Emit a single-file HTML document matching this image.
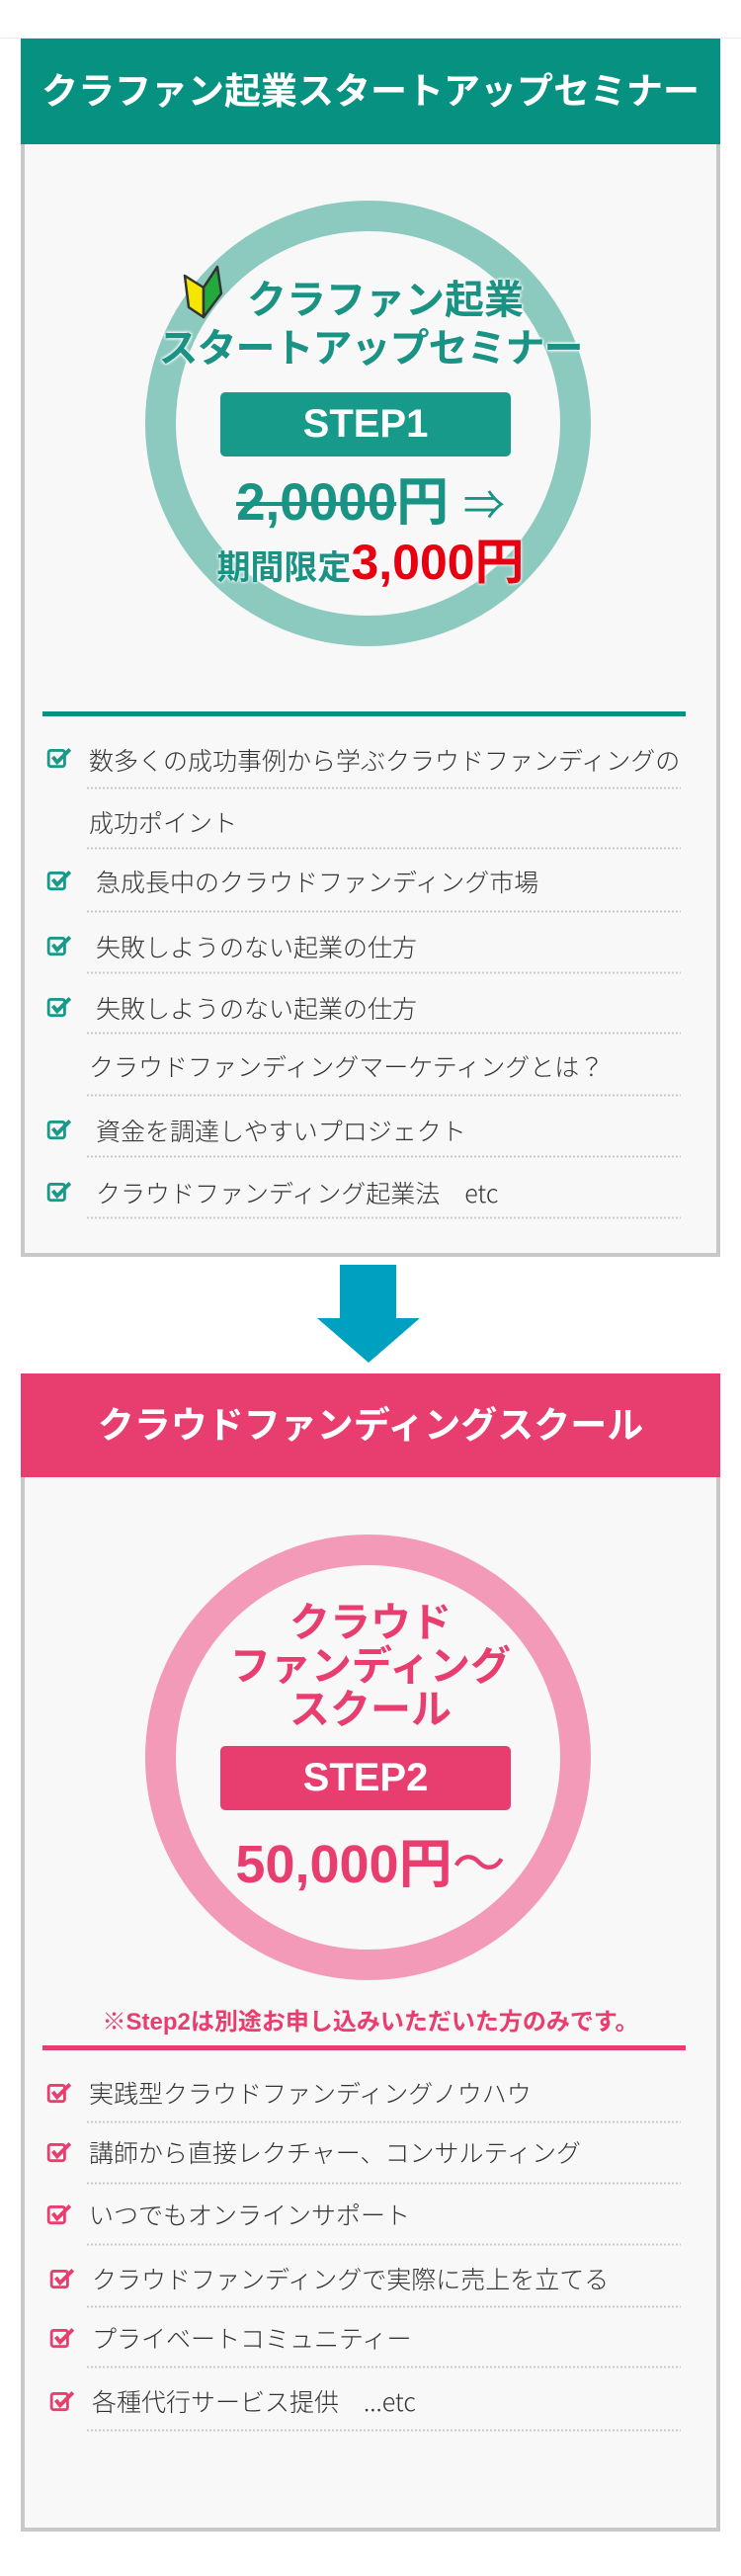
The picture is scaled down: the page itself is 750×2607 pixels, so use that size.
<!DOCTYPE html>
<html><head><meta charset="utf-8">
<style>
*{margin:0;padding:0;box-sizing:border-box}
body{width:750px;height:2607px;background:#fff;position:relative;font-family:"Liberation Sans","Noto Sans CJK JP",sans-serif;overflow:hidden}
.abs{position:absolute}
.box{position:absolute;left:21px;width:708px;background:#f8f8f8;border:4px solid #c8c8c8;border-top:none}
.hdr{position:absolute;left:21px;width:708px;color:#fff;font-weight:bold;text-align:center;white-space:nowrap}
.ring{position:absolute;border-radius:50%}
.c{position:absolute;left:0;width:750px;text-align:center;white-space:nowrap;font-weight:bold}
.step{position:absolute;left:223px;width:294px;border-radius:5px;color:#fff;font-weight:bold;font-size:40px;text-align:center}
.it{position:absolute;left:90px;font-size:25px;color:#333;white-space:nowrap;line-height:30px;font-family:"Noto Sans CJK JP",sans-serif;font-weight:300}
.dot{position:absolute;left:87px;width:602px;height:3px;background-image:radial-gradient(circle,#c8c8c8 1px,transparent 1.3px);background-size:4px 3px}
.ck{position:absolute;left:47px;width:26px;height:24px}
</style></head><body>
<div class="abs" style="left:0;top:38px;width:750px;height:1px;background:#e3eef3"></div>

<!-- box 1 -->
<div class="box" style="top:39px;height:1233px"></div>
<div class="hdr" style="top:39px;height:107px;background:#079181;font-size:37px;line-height:107px">クラファン起業スタートアップセミナー</div>
<div class="ring" style="left:147px;top:203px;width:451px;height:451px;border:31px solid #8ccabf"></div>
<svg class="abs" style="left:184px;top:267px" width="44" height="56" viewBox="0 0 44 56">
<path d="M3 12 L22 24 L22 54 L7 44 Z" fill="#f5e600" stroke="#333" stroke-width="2.5" stroke-linejoin="round"/>
<path d="M22 24 L36 3 L40 30 L22 54 Z" fill="#22aa3c" stroke="#333" stroke-width="2.5" stroke-linejoin="round"/>
</svg>
<div class="c" style="top:279px;font-size:40px;line-height:50px;color:#1a9384;text-shadow:0 0 3px #fff,0 0 3px #fff,0 0 3px #fff;padding-left:30px">クラファン起業</div>
<div class="c" style="top:328px;font-size:40px;line-height:50px;color:#1a9384;text-shadow:0 0 3px #fff,0 0 3px #fff,0 0 3px #fff;letter-spacing:-1px">スタートアップセミナー</div>
<div class="step" style="top:397px;height:65px;line-height:65px;background:#179a8a">STEP1</div>
<div class="c" style="top:480px;font-size:53px;line-height:58px;color:#1a9384"><span style="text-decoration:line-through;text-decoration-thickness:4px">2,0000</span>円 <span style="font-weight:normal;font-size:42px">⇒</span></div>
<div class="c" style="top:541px;line-height:56px;color:#1a9384;text-shadow:0 0 3px #fff,0 0 3px #fff"><span style="font-size:34px">期間限定</span><span style="font-size:50px;color:#e60012">3,000円</span></div>
<div class="abs" style="left:43px;top:720px;width:651px;height:5px;background:#079181"></div>

<svg width="0" height="0" style="position:absolute"><defs>
<symbol id="ckg" viewBox="0 0 24 22"><rect x="2" y="4" width="15" height="15" rx="2" fill="none" stroke="#179a8a" stroke-width="2.6"/><path d="M6 10 L10 15 L22 3" fill="none" stroke="#179a8a" stroke-width="3.6"/></symbol>
<symbol id="ckp" viewBox="0 0 24 22"><rect x="2" y="4" width="15" height="15" rx="2" fill="none" stroke="#e83e6f" stroke-width="2.6"/><path d="M6 10 L10 15 L22 3" fill="none" stroke="#e83e6f" stroke-width="3.6"/></symbol>
</defs></svg>

<svg class="ck" style="top:755px"><use href="#ckg"/></svg>
<div class="it" style="top:754px">数多くの成功事例から学ぶクラウドファンディングの</div>
<div class="dot" style="top:796px"></div>
<div class="it" style="top:817px">成功ポイント</div>
<div class="dot" style="top:857px"></div>
<svg class="ck" style="top:879px"><use href="#ckg"/></svg>
<div class="it" style="top:877px;left:97px">急成長中のクラウドファンディング市場</div>
<div class="dot" style="top:921px"></div>
<svg class="ck" style="top:945px"><use href="#ckg"/></svg>
<div class="it" style="top:943px;left:97px">失敗しようのない起業の仕方</div>
<div class="dot" style="top:983px"></div>
<svg class="ck" style="top:1007px"><use href="#ckg"/></svg>
<div class="it" style="top:1005px;left:97px">失敗しようのない起業の仕方</div>
<div class="dot" style="top:1044px"></div>
<div class="it" style="top:1064px">クラウドファンディングマーケティングとは？</div>
<div class="dot" style="top:1107px"></div>
<svg class="ck" style="top:1131px"><use href="#ckg"/></svg>
<div class="it" style="top:1129px;left:97px">資金を調達しやすいプロジェクト</div>
<div class="dot" style="top:1169px"></div>
<svg class="ck" style="top:1194px"><use href="#ckg"/></svg>
<div class="it" style="top:1192px;left:97px">クラウドファンディング起業法　etc</div>
<div class="dot" style="top:1231px"></div>

<!-- arrow -->
<svg class="abs" style="left:318px;top:1280px" width="110" height="100" viewBox="0 0 110 100">
<path d="M26 0 H83 V54 H107 L55 99 L3 54 H26 Z" fill="#00a0c0"/>
</svg>

<!-- box 2 -->
<div class="box" style="top:1390px;height:1172px;border-top:4px solid #c8c8c8"></div>
<div class="hdr" style="top:1390px;height:105px;background:#e83e6f;font-size:37px;line-height:105px">クラウドファンディングスクール</div>
<div class="ring" style="left:147px;top:1553px;width:451px;height:451px;border:31px solid #f39ab8"></div>
<div class="c" style="top:1620px;font-size:41px;line-height:44px;color:#e83e6f">クラウド<br>ファンディング<br>スクール</div>
<div class="step" style="top:1767px;height:65px;line-height:65px;background:#e83e6f">STEP2</div>
<div class="c" style="top:1856px;font-size:54px;line-height:62px;color:#e83e6f">50,000円<span style="font-weight:normal">〜</span></div>
<div class="c" style="top:2031px;font-size:24px;line-height:32px;color:#e83e6f">※Step2は別途お申し込みいただいた方のみです。</div>
<div class="abs" style="left:43px;top:2070px;width:651px;height:5px;background:#e83e6f"></div>

<svg class="ck" style="top:2106px"><use href="#ckp"/></svg>
<div class="it" style="top:2103px">実践型クラウドファンディングノウハウ</div>
<div class="dot" style="top:2146px"></div>
<svg class="ck" style="top:2166px"><use href="#ckp"/></svg>
<div class="it" style="top:2163px">講師から直接レクチャー、コンサルティング</div>
<div class="dot" style="top:2208px"></div>
<svg class="ck" style="top:2229px"><use href="#ckp"/></svg>
<div class="it" style="top:2226px">いつでもオンラインサポート</div>
<div class="dot" style="top:2270px"></div>
<svg class="ck" style="top:2294px;left:50px"><use href="#ckp"/></svg>
<div class="it" style="top:2291px;left:93px">クラウドファンディングで実際に売上を立てる</div>
<div class="dot" style="top:2333px"></div>
<svg class="ck" style="top:2354px;left:50px"><use href="#ckp"/></svg>
<div class="it" style="top:2351px;left:93px">プライベートコミュニティー</div>
<div class="dot" style="top:2394px"></div>
<svg class="ck" style="top:2418px;left:50px"><use href="#ckp"/></svg>
<div class="it" style="top:2415px;left:93px">各種代行サービス提供　...etc</div>
<div class="dot" style="top:2458px"></div>
</body></html>
